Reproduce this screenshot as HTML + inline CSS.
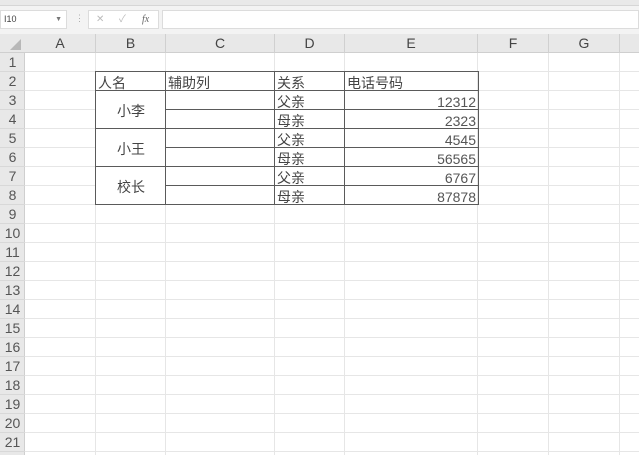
<!DOCTYPE html>
<html><head><meta charset="utf-8"><style>
*{margin:0;padding:0;box-sizing:border-box}
body{width:639px;height:455px;overflow:hidden;background:#fff;font-family:"Liberation Sans","Noto Sans CJK SC",sans-serif;position:relative}
.a{position:absolute}
#top{left:0;top:0;width:639px;height:34px;background:#f3f3f3;border-top:1px solid #ddd}
#strip{left:0;top:0;width:639px;height:6px;background:#e9e9e9;border-bottom:1px solid #d6d6d6}
.box{background:#fff;border:1px solid #dcdcdc}
#colh{left:0;top:34px;width:639px;height:19px;background:#e8e8e8;border-bottom:1px solid #cfcfcf}
#rowh{left:0;top:53px;width:25px;height:402px;background:#e8e8e8;border-right:1px solid #cfcfcf}
.ch{position:absolute;top:34px;height:19px;line-height:19px;text-align:center;font-size:14px;color:#444;border-right:1px solid #d0d0d0}
.rn{position:absolute;left:0;width:25px;height:19px;line-height:19px;text-align:center;font-size:14px;color:#555;border-bottom:1px solid #d8d8d8}
.vl{position:absolute;top:53px;width:1px;height:402px;background:#e6e6e6}
.hl{position:absolute;left:25px;width:614px;height:1px;background:#e6e6e6}
.t{position:absolute;font-size:14px;color:#444;line-height:19px;height:19px;margin-top:1px}
.b{position:absolute;background:#5a5a5a}
</style></head><body>
<div class="a" id="top"></div>
<div class="a" id="strip"></div>
<div class="a box" style="left:0;top:10px;width:67px;height:19px;font-size:9px;line-height:17px;padding-left:3px;color:#444">I10<span style="position:absolute;right:4px;font-size:7px;color:#777">▼</span></div>
<div class="a" style="left:75px;top:13px;font-size:9px;color:#aaa">⋮</div>
<div class="a box" style="left:88px;top:10px;width:71px;height:19px;font-size:10px;line-height:17px;color:#bbb"><span style="position:absolute;left:7px">✕</span><span style="position:absolute;left:30px">✓</span><span style="position:absolute;left:53px;color:#666;font-style:italic;font-family:'Liberation Serif',serif">fx</span></div>
<div class="a box" style="left:162px;top:10px;width:477px;height:19px"></div>
<div class="a" id="colh"></div>
<div class="a" id="rowh"></div>
<svg class="a" style="left:8px;top:39px" width="14" height="12"><polygon points="13,0 13,11 2,11" fill="#b8b8b8"/></svg>
<div class="ch" style="left:25px;width:71px">A</div>
<div class="ch" style="left:96px;width:70px">B</div>
<div class="ch" style="left:166px;width:109px">C</div>
<div class="ch" style="left:275px;width:70px">D</div>
<div class="ch" style="left:345px;width:133px">E</div>
<div class="ch" style="left:478px;width:71px">F</div>
<div class="ch" style="left:549px;width:71px">G</div>
<div class="vl" style="left:95px"></div><div class="vl" style="left:165px"></div><div class="vl" style="left:274px"></div><div class="vl" style="left:344px"></div><div class="vl" style="left:477px"></div><div class="vl" style="left:548px"></div><div class="vl" style="left:619px"></div>
<div class="hl" style="top:71px"></div><div class="hl" style="top:90px"></div><div class="hl" style="top:109px"></div><div class="hl" style="top:128px"></div><div class="hl" style="top:147px"></div><div class="hl" style="top:166px"></div><div class="hl" style="top:185px"></div><div class="hl" style="top:204px"></div><div class="hl" style="top:223px"></div><div class="hl" style="top:242px"></div><div class="hl" style="top:261px"></div><div class="hl" style="top:280px"></div><div class="hl" style="top:299px"></div><div class="hl" style="top:318px"></div><div class="hl" style="top:337px"></div><div class="hl" style="top:356px"></div><div class="hl" style="top:375px"></div><div class="hl" style="top:394px"></div><div class="hl" style="top:413px"></div><div class="hl" style="top:432px"></div><div class="hl" style="top:451px"></div>
<div class="rn" style="top:53px">1</div><div class="rn" style="top:72px">2</div><div class="rn" style="top:91px">3</div><div class="rn" style="top:110px">4</div><div class="rn" style="top:129px">5</div><div class="rn" style="top:148px">6</div><div class="rn" style="top:167px">7</div><div class="rn" style="top:186px">8</div><div class="rn" style="top:205px">9</div><div class="rn" style="top:224px">10</div><div class="rn" style="top:243px">11</div><div class="rn" style="top:262px">12</div><div class="rn" style="top:281px">13</div><div class="rn" style="top:300px">14</div><div class="rn" style="top:319px">15</div><div class="rn" style="top:338px">16</div><div class="rn" style="top:357px">17</div><div class="rn" style="top:376px">18</div><div class="rn" style="top:395px">19</div><div class="rn" style="top:414px">20</div><div class="rn" style="top:433px">21</div>
<div class="a" style="left:96px;top:91px;width:70px;height:114px;background:#fff"></div>
<div class="b" style="left:95px;top:71px;width:384px;height:1px"></div>
<div class="b" style="left:95px;top:90px;width:384px;height:1px"></div>
<div class="b" style="left:166px;top:109px;width:313px;height:1px"></div>
<div class="b" style="left:95px;top:128px;width:384px;height:1px"></div>
<div class="b" style="left:166px;top:147px;width:313px;height:1px"></div>
<div class="b" style="left:95px;top:166px;width:384px;height:1px"></div>
<div class="b" style="left:166px;top:185px;width:313px;height:1px"></div>
<div class="b" style="left:95px;top:204px;width:384px;height:1px"></div>
<div class="b" style="left:95px;top:71px;width:1px;height:134px"></div>
<div class="b" style="left:165px;top:71px;width:1px;height:134px"></div>
<div class="b" style="left:274px;top:71px;width:1px;height:134px"></div>
<div class="b" style="left:344px;top:71px;width:1px;height:134px"></div>
<div class="b" style="left:478px;top:71px;width:1px;height:134px"></div>
<div class="t" style="left:98px;top:73px">人名</div>
<div class="t" style="left:168px;top:73px">辅助列</div>
<div class="t" style="left:277px;top:73px">关系</div>
<div class="t" style="left:347px;top:73px">电话号码</div>
<div class="t" style="left:96px;width:70px;text-align:center;top:101px">小李</div>
<div class="t" style="left:96px;width:70px;text-align:center;top:139px">小王</div>
<div class="t" style="left:96px;width:70px;text-align:center;top:177px">校长</div>
<div class="t" style="left:277px;top:92px">父亲</div>
<div class="t" style="left:277px;top:111px">母亲</div>
<div class="t" style="left:277px;top:130px">父亲</div>
<div class="t" style="left:277px;top:149px">母亲</div>
<div class="t" style="left:277px;top:168px">父亲</div>
<div class="t" style="left:277px;top:187px">母亲</div>
<div class="t" style="left:345px;width:131px;text-align:right;top:92px;color:#555">12312</div>
<div class="t" style="left:345px;width:131px;text-align:right;top:111px;color:#555">2323</div>
<div class="t" style="left:345px;width:131px;text-align:right;top:130px;color:#555">4545</div>
<div class="t" style="left:345px;width:131px;text-align:right;top:149px;color:#555">56565</div>
<div class="t" style="left:345px;width:131px;text-align:right;top:168px;color:#555">6767</div>
<div class="t" style="left:345px;width:131px;text-align:right;top:187px;color:#555">87878</div>
</body></html>
